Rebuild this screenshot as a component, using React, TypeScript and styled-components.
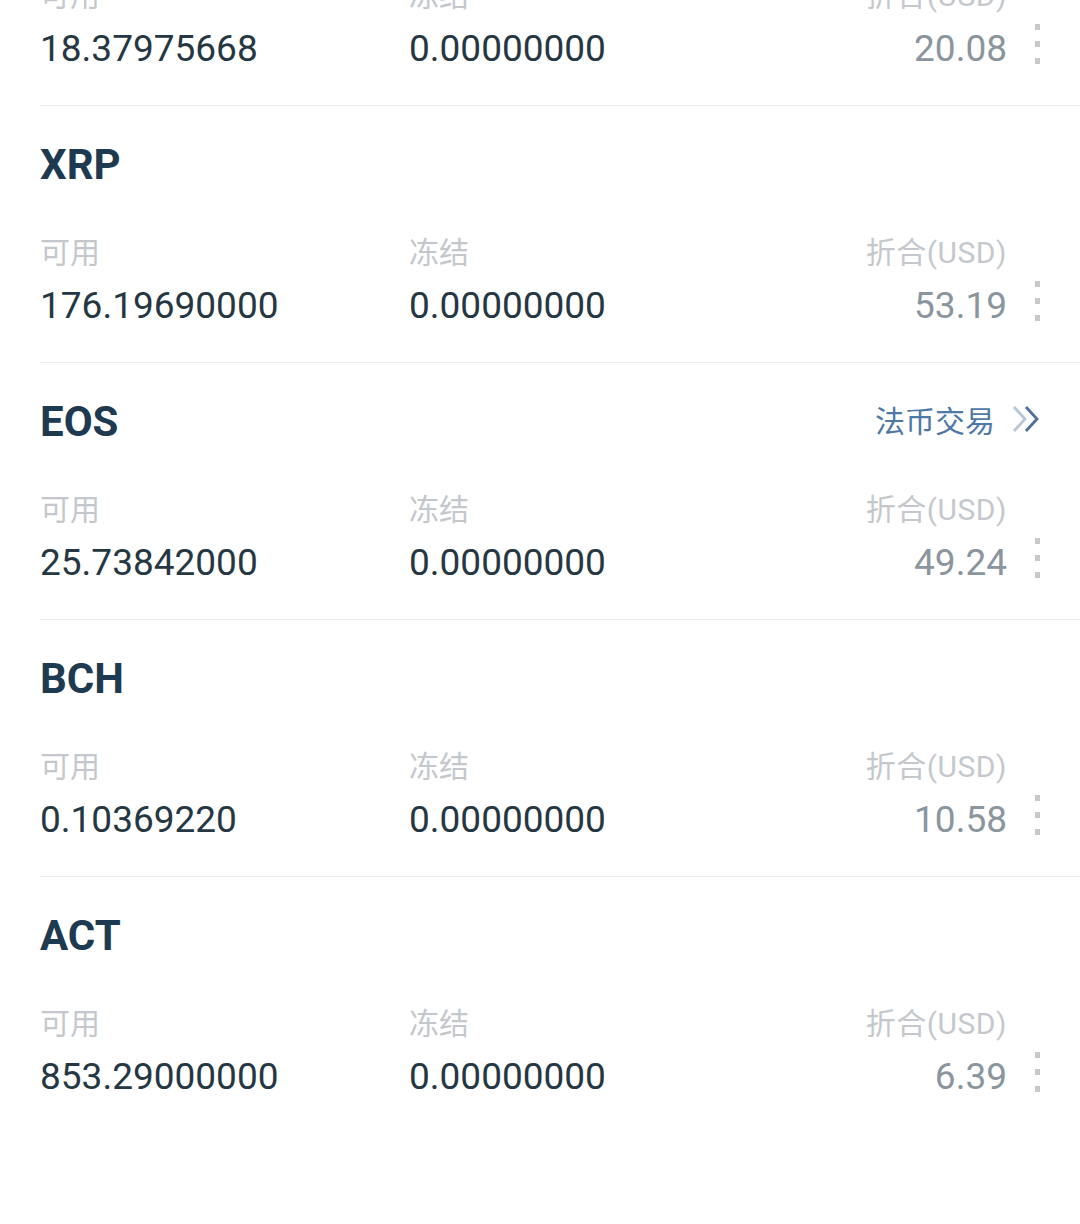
import React from "react";
import styled, { createGlobalStyle } from "styled-components";

const GlobalStyle = createGlobalStyle`
  html, body { margin: 0; padding: 0; background: #ffffff; }
  body { font-family: Roboto, "Noto Sans CJK SC", sans-serif; overflow: hidden; }
`;

const Page = styled.div`
  width: 1080px;
  height: 1224px;
  overflow: hidden;
  background: #ffffff;
`;

const List = styled.div`
  display: flex;
  flex-direction: column;
  margin-top: -151px;
`;

const Card = styled.div<{ $last?: boolean }>`
  margin-left: 40px;
  border-bottom: ${(p) => (p.$last ? "none" : "1px solid #e9ebec")};
  padding-top: 33px;
  display: flex;
  flex-direction: column;
  box-sizing: border-box;
  height: 257px;
`;

const TitleRow = styled.div`
  display: flex;
  align-items: center;
  justify-content: space-between;
  height: 50px;
  margin-top: 1px;
  padding-right: 40px;
`;

const Coin = styled.div`
  font-family: Roboto, sans-serif;
  font-weight: 700;
  font-size: 42px;
  line-height: 50px;
  color: #1d3a50;
`;

const FiatLink = styled.a`
  display: flex;
  align-items: center;
  gap: 17px;
  margin-top: -6px;
  font-family: "Noto Sans CJK SC", sans-serif;
  font-size: 30px;
  line-height: 40px;
  color: #4e78a6;
  text-decoration: none;
`;

const Grid = styled.div`
  margin-top: 43px;
  display: grid;
  grid-template-columns: 369px 1fr auto 73px;
  grid-template-rows: 40px 46px;
  row-gap: 10px;
`;

const Label = styled.div<{ $right?: boolean }>`
  font-family: Roboto, "Noto Sans CJK SC", sans-serif;
  font-size: 30px;
  line-height: 40px;
  color: #c4c8cc;
  text-align: ${(p) => (p.$right ? "right" : "left")};
  white-space: nowrap;
  letter-spacing: ${(p) => (p.$right ? "0.5px" : "0")};
`;

const Value = styled.div<{ $muted?: boolean; $right?: boolean }>`
  font-family: Roboto, sans-serif;
  font-size: 37px;
  line-height: 46px;
  color: ${(p) => (p.$muted ? "#8a959e" : "#263744")};
  text-align: ${(p) => (p.$right ? "right" : "left")};
  white-space: nowrap;
`;

const MoreButton = styled.div`
  grid-column: 4;
  grid-row: 2;
  display: flex;
  flex-direction: column;
  justify-content: center;
  gap: 11px;
  padding-left: 28px;
  margin-top: -10px;
`;

const Dot = styled.span`
  width: 5px;
  height: 6px;
  background: #c6c8ca;
  display: block;
`;

const Spacer = styled.div``;

type Asset = {
  coin: string;
  avail: string;
  frozen: string;
  usd: string;
  fiat?: boolean;
};

const assets: Asset[] = [
  { coin: "ETH", avail: "18.37975668", frozen: "0.00000000", usd: "20.08" },
  { coin: "XRP", avail: "176.19690000", frozen: "0.00000000", usd: "53.19" },
  { coin: "EOS", avail: "25.73842000", frozen: "0.00000000", usd: "49.24", fiat: true },
  { coin: "BCH", avail: "0.10369220", frozen: "0.00000000", usd: "10.58" },
  { coin: "ACT", avail: "853.29000000", frozen: "0.00000000", usd: "6.39" },
];

const Chevrons = () => (
  <svg width="28" height="28" viewBox="0 0 28 28" fill="none">
    <path d="M2 2 L13 14 L2 26" stroke="#b9c5d8" strokeWidth="2.8" strokeLinejoin="miter" />
    <path d="M14 2 L25 14 L14 26" stroke="#4f6f9e" strokeWidth="2.8" strokeLinejoin="miter" />
  </svg>
);

export default function App() {
  return (
    <Page>
      <GlobalStyle />
      <List>
        {assets.map((a, i) => (
          <Card key={a.coin} $last={i === assets.length - 1}>
            <TitleRow>
              <Coin>{a.coin}</Coin>
              {a.fiat ? (
                <FiatLink>
                  法币交易
                  <Chevrons />
                </FiatLink>
              ) : (
                <Spacer />
              )}
            </TitleRow>
            <Grid>
              <Label>可用</Label>
              <Label>冻结</Label>
              <Label $right>折合(USD)</Label>
              <Spacer />
              <Value>{a.avail}</Value>
              <Value>{a.frozen}</Value>
              <Value $muted $right>{a.usd}</Value>
              <MoreButton>
                <Dot />
                <Dot />
                <Dot />
              </MoreButton>
            </Grid>
          </Card>
        ))}
      </List>
    </Page>
  );
}
